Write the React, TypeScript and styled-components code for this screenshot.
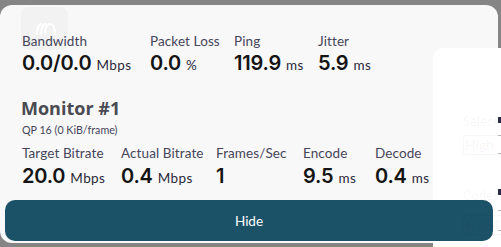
import React from "react";
import styled, { createGlobalStyle } from "styled-components";

const Global = createGlobalStyle`
  html, body { margin: 0; padding: 0; background: #858585; overflow: hidden; }
  body { width: 501px; height: 247px; font-family: "Lato", "Open Sans", sans-serif; }
  #root { width: 501px; height: 247px; position: relative; }
`;

const Page = styled.div`
  width: 501px;
  height: 247px;
  padding-top: 5px;
  box-sizing: border-box;
  position: relative;
  overflow: hidden;
`;

const Card = styled.div`
  width: 498px;
  height: 238px;
  background: #f8f8f8;
  border-radius: 12px;
  box-sizing: border-box;
  padding: 28px 5px 0 5px;
  display: flex;
  flex-direction: column;
  position: relative;
`;

const LogoTile = styled.div`
  position: absolute;
  left: 21px;
  top: 2px;
  width: 47px;
  height: 43px;
  border-radius: 8px;
  background: #f2f2f2;
  display: flex;
  align-items: center;
  justify-content: center;
  z-index: 0;
`;

const Section = styled.div`
  padding-left: 17px;
  display: flex;
  flex-direction: column;
  position: relative;
  z-index: 1;
`;

const Row = styled.div<{ $mt?: number }>`
  display: flex;
  margin-top: ${(p) => p.$mt ?? 0}px;
`;

const Stat = styled.div<{ $w: number }>`
  width: ${(p) => p.$w}px;
  flex: none;
  display: flex;
  flex-direction: column;
  white-space: nowrap;
`;

const Label = styled.div`
  font-family: "Lato", sans-serif;
  font-size: 13.5px;
  line-height: 16px;
  color: #46455a;
  letter-spacing: 0.1px;
`;

const Value = styled.div<{ $gap: number }>`
  margin-top: ${(p) => p.$gap}px;
  display: flex;
  align-items: baseline;
  gap: 5px;
  color: #141414;
`;

const Num = styled.span`
  font-family: "Inter", sans-serif;
  font-weight: 600;
  font-size: 20px;
  line-height: 24px;
  letter-spacing: -0.2px;
`;

const Unit = styled.span`
  font-family: "Lato", sans-serif;
  font-size: 13.5px;
  color: #2a2838;
  letter-spacing: 0.4px;
`;

const Title = styled.div`
  margin-top: 22px;
  font-family: "Open Sans", sans-serif;
  font-weight: 700;
  font-size: 18px;
  line-height: 22px;
  color: #4a4a52;
  margin-left: -1px;
`;

const Sub = styled.div`
  margin-top: 5px;
  font-family: "Lato", sans-serif;
  font-size: 10.7px;
  line-height: 12px;
  color: #45445a;
`;

const HideButton = styled.button`
  margin-top: 12px;
  height: 41px;
  width: 488px;
  border: none;
  border-radius: 10px;
  background: #1b5268;
  color: #ffffff;
  font-family: "Lato", sans-serif;
  font-size: 13.5px;
  position: relative;
  z-index: 2;
  padding: 0;
`;

const SidePanel = styled.div`
  position: absolute;
  left: 433px;
  top: 48px;
  width: 90px;
  height: 220px;
  background: #ffffff;
  border-radius: 10px 0 0 0;
  z-index: 1;
`;

const SideContent = styled.div`
  position: absolute;
  left: 463px;
  top: 112px;
  width: 38px;
  display: flex;
  flex-direction: column;
  z-index: 3;
  pointer-events: none;
`;

const FaintLabel = styled.div<{ $mt?: number }>`
  margin-top: ${(p) => p.$mt ?? 0}px;
  font-family: "Lato", sans-serif;
  font-size: 13px;
  line-height: 18px;
  color: rgba(0, 0, 0, 0.045);
  white-space: nowrap;
`;

const FaintBox = styled.div<{ $mt: number }>`
  margin-top: ${(p) => p.$mt}px;
  height: 18px;
  border: 1px solid rgba(0, 0, 0, 0.03);
  border-right: none;
  border-radius: 3px 0 0 3px;
  font-family: "Lato", sans-serif;
  font-size: 14px;
  line-height: 18px;
  color: rgba(0, 0, 0, 0.05);
  padding-left: 1px;
  white-space: nowrap;
`;

const Tick = styled.div<{ $top: number; $dark?: boolean }>`
  position: absolute;
  left: 498px;
  top: ${(p) => p.$top}px;
  width: 3px;
  height: ${(p) => (p.$dark ? 6 : 1)}px;
  background: ${(p) => (p.$dark ? "#2b2b48" : "#b8b8b8")};
  z-index: 3;
`;

type S = { label: string; num: string; unit: string; w: number };

const row1: S[] = [
  { label: "Bandwidth", num: "0.0/0.0", unit: "Mbps", w: 128 },
  { label: "Packet Loss", num: "0.0", unit: "%", w: 84 },
  { label: "Ping", num: "119.9", unit: "ms", w: 84 },
  { label: "Jitter", num: "5.9", unit: "ms", w: 90 },
];

const row2: S[] = [
  { label: "Target Bitrate", num: "20.0", unit: "Mbps", w: 99 },
  { label: "Actual Bitrate", num: "0.4", unit: "Mbps", w: 95 },
  { label: "Frames/Sec", num: "1", unit: "", w: 87 },
  { label: "Encode", num: "9.5", unit: "ms", w: 72 },
  { label: "Decode", num: "0.4", unit: "ms", w: 70 },
];

const StatItem = ({ s, gap }: { s: S; gap: number }) => (
  <Stat $w={s.w}>
    <Label>{s.label}</Label>
    <Value $gap={gap}>
      <Num>{s.num}</Num>
      {s.unit && <Unit>{s.unit}</Unit>}
    </Value>
  </Stat>
);

export default function App() {
  return (
    <>
      <Global />
      <Page>
        <Card>
          <LogoTile>
            <svg width="22" height="14" viewBox="0 0 22 14" fill="none" stroke="#ffffff" strokeWidth="2" strokeLinecap="round">
              <path d="M3 12 C3 6 5 3 7 2" />
              <path d="M7 12 C7 6 9 3 11 2" />
              <path d="M11 12 C11 5 13 2 16 2 C19 2 21 6 21 12" />
            </svg>
          </LogoTile>
          <Section>
            <Row>
              {row1.map((s) => (
                <StatItem key={s.label} s={s} gap={2} />
              ))}
            </Row>
            <Title>Monitor #1</Title>
            <Sub>QP 16 (0 KiB/frame)</Sub>
            <Row $mt={9}>
              {row2.map((s) => (
                <StatItem key={s.label} s={s} gap={3} />
              ))}
            </Row>
          </Section>
          <HideButton>Hide</HideButton>
        </Card>
        <SidePanel />
        <SideContent>
          <FaintLabel>Select</FaintLabel>
          <FaintBox $mt={5}>High</FaintBox>
          <FaintLabel $mt={31}>Codec</FaintLabel>
          <FaintBox $mt={11}>H264</FaintBox>
        </SideContent>
        <Tick $top={117} $dark />
        <Tick $top={135} />
        <Tick $top={153} />
        <Tick $top={189} $dark />
        <Tick $top={210} />
        <Tick $top={230} />
      </Page>
    </>
  );
}
